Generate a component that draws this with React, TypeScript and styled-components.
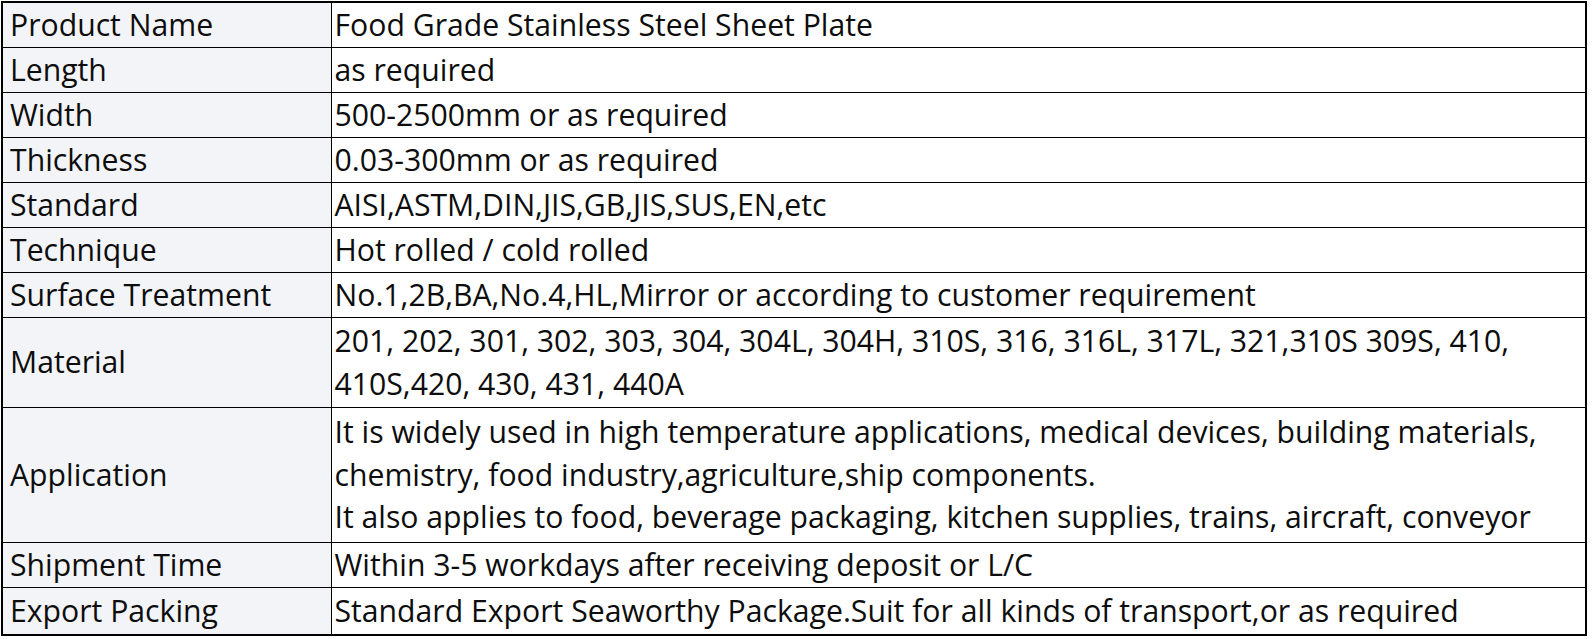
import styled, { createGlobalStyle } from 'styled-components';

const GlobalStyle = createGlobalStyle`
  html, body {
    margin: 0;
    padding: 0;
    background: #ffffff;
  }
`;

const Page = styled.div`
  padding: 1px 0 0 1px;
`;

const SpecTable = styled.table`
  width: 1586px;
  border-collapse: collapse;
  border: 2px solid #000000;
  font-family: 'Open Sans', 'Noto Sans', sans-serif;
  font-size: 30.2px;
  color: #0d0d0d;
  table-layout: fixed;
`;

const LabelCol = styled.col`
  width: 329px;
`;

const LabelCell = styled.td`
  padding: 0 4px 0 7px;
  background: #f3f4f8;
  border: 1px solid #000000;
  vertical-align: middle;
  line-height: 42.5px;
  white-space: nowrap;
`;

const ValueCell = styled.td<{ $height: number }>`
  height: ${(p) => p.$height}px;
  padding: 0 4px 0 3px;
  background: #ffffff;
  border: 1px solid #000000;
  vertical-align: middle;
  line-height: 42.5px;
`;

const Line = styled.div`
  white-space: nowrap;
`;

const rows: { label: string; value: string[] }[] = [
  { label: 'Product Name', value: ['Food Grade Stainless Steel Sheet Plate'] },
  { label: 'Length', value: ['as required'] },
  { label: 'Width', value: ['500-2500mm or as required'] },
  { label: 'Thickness', value: ['0.03-300mm or as required'] },
  { label: 'Standard', value: ['AISI,ASTM,DIN,JIS,GB,JIS,SUS,EN,etc'] },
  { label: 'Technique', value: ['Hot rolled / cold rolled'] },
  {
    label: 'Surface Treatment',
    value: ['No.1,2B,BA,No.4,HL,Mirror or according to customer requirement'],
  },
  {
    label: 'Material',
    value: [
      '201, 202, 301, 302, 303, 304, 304L, 304H, 310S, 316, 316L, 317L, 321,310S 309S, 410,',
      '410S,420, 430, 431, 440A',
    ],
  },
  {
    label: 'Application',
    value: [
      'It is widely used in high temperature applications, medical devices, building materials,',
      'chemistry, food industry,agriculture,ship components.',
      'It also applies to food, beverage packaging, kitchen supplies, trains, aircraft, conveyor',
    ],
  },
  { label: 'Shipment Time', value: ['Within 3-5 workdays after receiving deposit or L/C'] },
  {
    label: 'Export Packing',
    value: ['Standard Export Seaworthy Package.Suit for all kinds of transport,or as required'],
  },
];

export default function App() {
  return (
    <Page>
      <GlobalStyle />
      <SpecTable>
        <colgroup>
          <LabelCol />
          <col />
        </colgroup>
        <tbody>
          {rows.map((row, i) => (
            <tr key={row.label}>
              <LabelCell>{row.label}</LabelCell>
              <ValueCell $height={row.value.length * 45 - 1 + (i === rows.length - 1 ? 2 : 0)}>
                {row.value.map((line) => (
                  <Line key={line}>{line}</Line>
                ))}
              </ValueCell>
            </tr>
          ))}
        </tbody>
      </SpecTable>
    </Page>
  );
}
